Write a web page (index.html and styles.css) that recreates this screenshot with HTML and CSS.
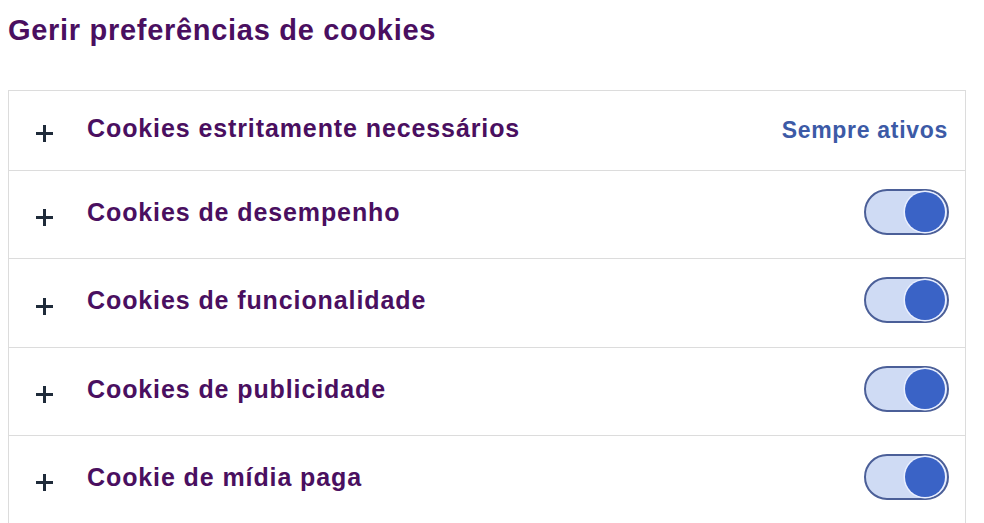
FILE: index.html
```html
<!DOCTYPE html>
<html lang="pt">
<head>
<meta charset="utf-8">
<title>Gerir preferências de cookies</title>
<link rel="stylesheet" href="styles.css">
</head>
<body>
<h2 class="title">Gerir preferências de cookies</h2>
<div class="list">
  <div class="row row-first">
    <span class="plus"></span>
    <span class="label">Cookies estritamente necessários</span>
    <span class="always">Sempre ativos</span>
  </div>
  <div class="row">
    <span class="plus"></span>
    <span class="label">Cookies de desempenho</span>
    <span class="toggle"><span class="knob"></span></span>
  </div>
  <div class="row row-tall">
    <span class="plus"></span>
    <span class="label">Cookies de funcionalidade</span>
    <span class="toggle"><span class="knob"></span></span>
  </div>
  <div class="row">
    <span class="plus"></span>
    <span class="label">Cookies de publicidade</span>
    <span class="toggle"><span class="knob"></span></span>
  </div>
  <div class="row">
    <span class="plus"></span>
    <span class="label">Cookie de mídia paga</span>
    <span class="toggle"><span class="knob"></span></span>
  </div>
</div>
</body>
</html>
```

FILE: styles.css
```css
html, body {
  background: #ffffff;
}
body {
  margin: 8px;
  font-family: "Liberation Sans", Arial, sans-serif;
  overflow: hidden;
}
.title {
  margin: 6px 0 0 0;
  font-size: 29px;
  line-height: 32px;
  font-weight: bold;
  letter-spacing: 0.7px;
  color: #4a0f60;
}
.list {
  margin-top: 44px;
  width: 958px;
}
.row {
  display: flex;
  align-items: center;
  height: 87px;
  border: 1px solid #dcdcdc;
  border-top: none;
  padding: 0 17px 0 27px;
  box-sizing: content-box;
}
.row-first {
  border-top: 1px solid #dcdcdc;
  height: 79px;
}
.row-tall {
  height: 88px;
}
.plus {
  position: relative;
  width: 17px;
  height: 17px;
  margin-top: 6px;
  flex: none;
}
.plus::before,
.plus::after {
  content: "";
  position: absolute;
  background: #1f2b3a;
}
.plus::before {
  left: 0;
  top: 7px;
  width: 17px;
  height: 3px;
}
.plus::after {
  left: 7px;
  top: 0;
  width: 3px;
  height: 17px;
}
.label {
  margin-left: 34px;
  margin-top: -5px;
  font-size: 25px;
  font-weight: bold;
  letter-spacing: 0.9px;
  color: #4a0f60;
  flex: 1;
}
.always {
  font-size: 23px;
  font-weight: bold;
  letter-spacing: 0.7px;
  color: #3c5aa6;
  margin-top: 0;
}
.toggle {
  display: flex;
  align-items: center;
  justify-content: flex-end;
  width: 85px;
  height: 46px;
  box-sizing: border-box;
  border: 2px solid #4b5f98;
  border-radius: 23px;
  background: #cfdbf4;
  padding-right: 2px;
  margin-top: -6px;
  margin-right: -1px;
}
.knob {
  width: 40px;
  height: 40px;
  border-radius: 50%;
  background: #3a63c6;
  box-shadow: 0 0 0 1.5px #e9efff;
}
```
